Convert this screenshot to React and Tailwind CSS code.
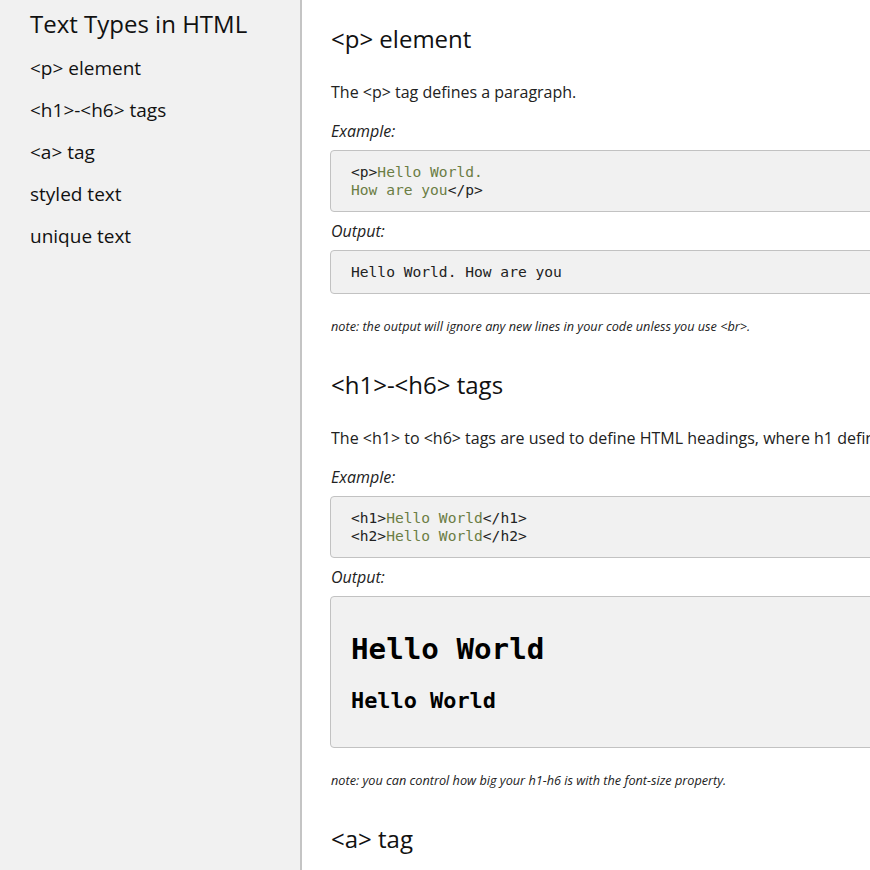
import React from 'react';

const sans = "font-['Open_Sans',sans-serif]";
const mono = "font-['DejaVu_Sans_Mono',monospace]";

const links = ['<p> element', '<h1>-<h6> tags', '<a> tag', 'styled text', 'unique text'];

const Label = ({ children }) => (
  <p className="italic text-[16px] leading-[22px] text-[#222]">{children}</p>
);

const CodeBox = ({ children, className = '' }) => (
  <div className={`-ml-px w-[600px] rounded-[4px] border border-[#c2c2c2] bg-[#f1f1f1] px-5 ${className}`}>
    {children}
  </div>
);

const Tok = ({ children }) => <span className="text-[#6b7d44]">{children}</span>;

const Note = ({ children }) => (
  <p className="mt-[24px] whitespace-nowrap text-[12.7px] italic leading-[17px] text-[#222]">{children}</p>
);

const App = () => {
  return (
    <div className={`flex h-[870px] w-[870px] overflow-hidden bg-white text-[#111] ${sans}`}>
      {/* Sidebar */}
      <aside className="w-[302px] shrink-0 border-r-2 border-[#c4c4c4] bg-[#f1f1f1] pl-[30px] pt-[8px]">
        <h3 className="text-[24px] leading-[32px] text-[#111]">Text Types in HTML</h3>
        <ul className="mt-[15px] flex flex-col gap-[16px]">
          {links.map((l) => (
            <li key={l} className="text-[19px] leading-[26px] text-[#111]">{l}</li>
          ))}
        </ul>
      </aside>

      {/* Main */}
      <main className="min-w-0 flex-1 pl-[29px] pt-[23px]">
        <section>
          <h2 className="text-[24px] leading-[32px]">&lt;p&gt; element</h2>
          <p className="mt-[26px] text-[16px] leading-[22px] text-[#222]">The &lt;p&gt; tag defines a paragraph.</p>
          <div className="mt-[17px]"><Label>Example:</Label></div>
          <CodeBox className="mt-[8px] py-[12px]">
            <pre className={`${mono} text-[14.6px] leading-[18px] text-[#222]`}>
              &lt;p&gt;<Tok>Hello World.</Tok>{'\n'}<Tok>How are you</Tok>&lt;/p&gt;
            </pre>
          </CodeBox>
          <div className="mt-[8px]"><Label>Output:</Label></div>
          <CodeBox className="mt-[8px] py-[12px]">
            <p className={`${mono} text-[14.6px] leading-[18px] text-[#222]`}>Hello World. How are you</p>
          </CodeBox>
          <Note>note: the output will ignore any new lines in your code unless you use &lt;br&gt;.</Note>
        </section>

        <section className="mt-[34px]">
          <h2 className="text-[24px] leading-[32px]">&lt;h1&gt;-&lt;h6&gt; tags</h2>
          <p className="mt-[26px] w-[600px] truncate text-[16px] leading-[22px] text-[#222]">
            The &lt;h1&gt; to &lt;h6&gt; tags are used to define HTML headings, where h1 defines the most important heading.
          </p>
          <div className="mt-[17px]"><Label>Example:</Label></div>
          <CodeBox className="mt-[8px] py-[12px]">
            <pre className={`${mono} text-[14.6px] leading-[18px] text-[#222]`}>
              &lt;h1&gt;<Tok>Hello World</Tok>&lt;/h1&gt;{'\n'}&lt;h2&gt;<Tok>Hello World</Tok>&lt;/h2&gt;
            </pre>
          </CodeBox>
          <div className="mt-[8px]"><Label>Output:</Label></div>
          <CodeBox className="mt-[8px] pb-[33px] pt-[25px]">
            <p className={`${mono} my-[10px] text-[29.2px] font-bold leading-[34px] text-black`}>Hello World</p>
            <p className={`${mono} mt-[22px] text-[21.9px] font-bold leading-[26px] text-black`}>Hello World</p>
          </CodeBox>
          <Note>note: you can control how big your h1-h6 is with the font-size property.</Note>
        </section>

        <section className="mt-[34px]">
          <h2 className="text-[24px] leading-[32px]">&lt;a&gt; tag</h2>
        </section>
      </main>
    </div>
  );
};

export default App;
